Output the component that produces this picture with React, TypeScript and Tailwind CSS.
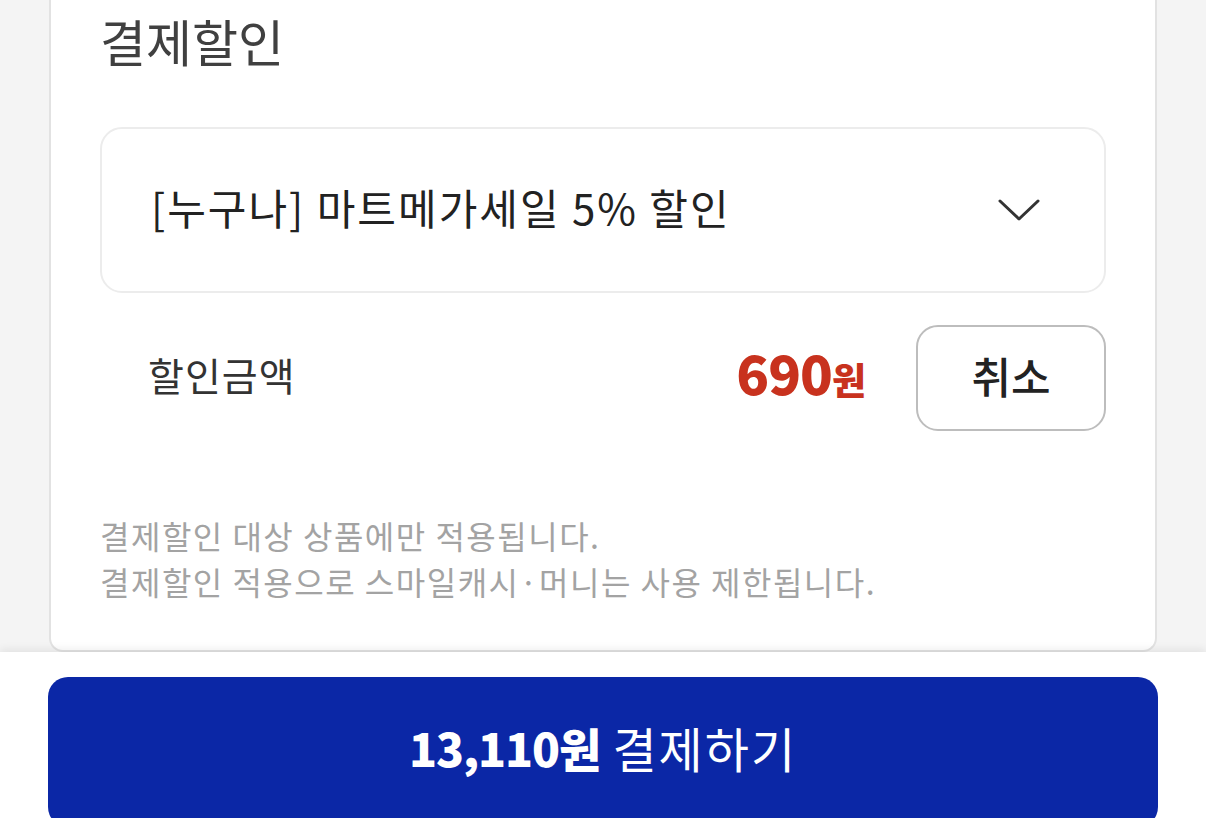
const FONT = { fontFamily: '"Noto Sans CJK KR", "Noto Sans", sans-serif' }

function Chevron() {
  return (
    <svg width="42" height="24" viewBox="0 0 42 24" fill="none" aria-hidden>
      <polyline
        points="2,3 21,21 40,3"
        stroke="#333"
        strokeWidth="3"
        strokeLinecap="round"
        strokeLinejoin="round"
      />
    </svg>
  )
}

export default function App() {
  return (
    <div className="flex h-[818px] flex-col overflow-hidden bg-[#f4f4f4]" style={FONT}>
      <div className="flex flex-1 flex-col px-[49px]">
        <section className="flex flex-1 flex-col rounded-b-[14px] border-x-2 border-b-2 border-[#e2e2e2] bg-white px-[49px]">
          <h2 className="mt-[8px] text-[50px] leading-[64px] text-[#404040]">결제할인</h2>

          <button className="mt-[55px] flex h-[166px] w-full items-center justify-between rounded-[22px] border-2 border-[#ececec] bg-white pl-[49px] pr-[64px] text-left">
            <span className="pb-[6px] text-[42px] leading-none tracking-[2px] text-[#222]">[누구나] 마트메가세일 5% 할인</span>
            <Chevron />
          </button>

          <div className="mt-[32px] flex h-[106px] items-center">
            <span className="pb-[8px] pl-[48px] text-[39px] tracking-[1px] text-[#333]">할인금액</span>
            <span className="ml-auto flex items-baseline pb-[12px] font-extrabold text-[#c8321e]">
              <span className="text-[54px] leading-none tracking-[-1px]">690</span>
              <span className="text-[37px] leading-none">원</span>
            </span>
            <button className="ml-[50px] flex h-[106px] w-[190px] items-center justify-center rounded-[22px] border-2 border-[#bdbdbd] bg-white pb-[6px] text-[43px] font-medium text-[#222]">
              취소
            </button>
          </div>

          <div className="mt-[81px] text-[32px] leading-[46px] tracking-[1.5px] text-[#a3a3a3]">
            <p>결제할인 대상 상품에만 적용됩니다.</p>
            <p>결제할인 적용으로 스마일캐시·머니는 사용 제한됩니다.</p>
          </div>
        </section>
      </div>

      <div className="h-[166px] shrink-0 bg-white px-[48px] pt-[25px] shadow-[0_-3px_8px_rgba(0,0,0,0.07)]">
        <button className="flex h-[150px] w-full items-center justify-center gap-[12px] rounded-[20px] bg-[#0b27a6] pb-[10px] text-white">
          <span className="text-[46px] font-extrabold tracking-[-1px]">13,110원</span>
          <span className="text-[48px] tracking-[2px]">결제하기</span>
        </button>
      </div>
    </div>
  )
}
